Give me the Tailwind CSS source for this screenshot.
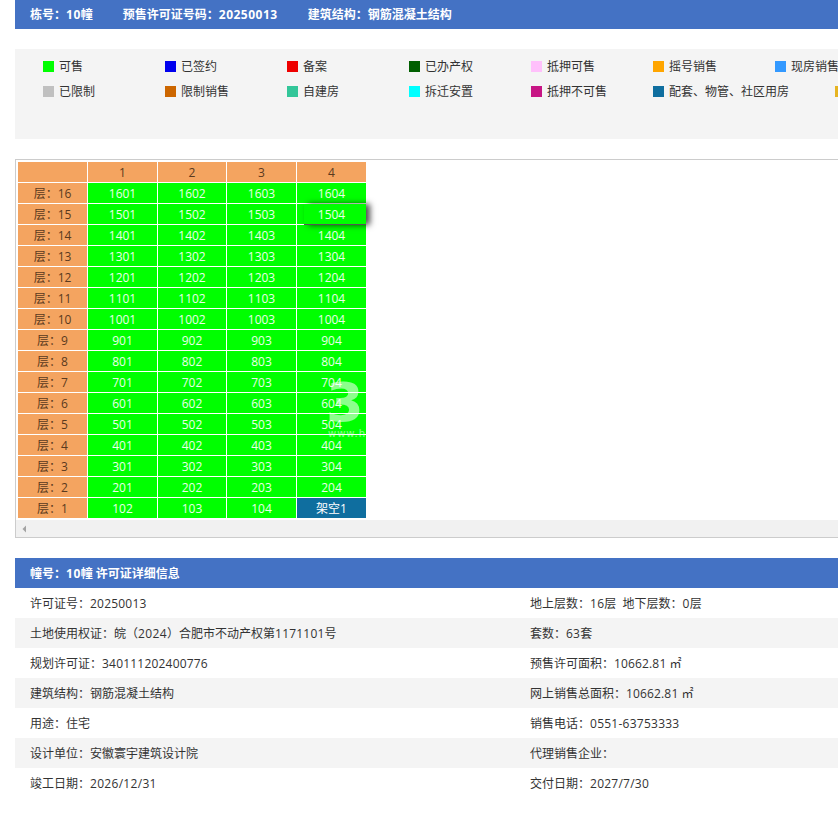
<!DOCTYPE html>
<html lang="zh">
<head>
  <meta charset="UTF-8">
  <title>10幢 许可证详细信息</title>
  <script src="https://cdn.jsdelivr.net/npm/@tailwindcss/browser@4"></script>
</head>
<body class="bg-white overflow-hidden h-[818px] text-[12px] text-[#333] font-['Open_Sans','Noto_Sans_CJK_SC',sans-serif]">
  <div class="w-[1000px] ml-[15px]">

    <div class="h-[29px] bg-[#4472c4] text-white font-bold pl-[15px] flex items-center gap-[30px]">
      <span>栋号：<span class="tracking-[0.5px]">10</span>幢</span>
      <span>预售许可证号码：<span class="tracking-[0.5px]">20250013</span></span>
      <span>建筑结构：钢筋混凝土结构</span>
    </div>

    <div class="mt-[20px] h-[90px] bg-[#f4f4f4] pl-[28px] pt-[5px]">
      <div class="flex h-[25px] items-center">
        <div class="flex items-center w-[122px]"><i class="w-[11px] h-[11px] mr-[5px] bg-[#00ff00]"></i>可售</div>
        <div class="flex items-center w-[122px]"><i class="w-[11px] h-[11px] mr-[5px] bg-[#0000ee]"></i>已签约</div>
        <div class="flex items-center w-[122px]"><i class="w-[11px] h-[11px] mr-[5px] bg-[#ee0000]"></i>备案</div>
        <div class="flex items-center w-[122px]"><i class="w-[11px] h-[11px] mr-[5px] bg-[#005f00]"></i>已办产权</div>
        <div class="flex items-center w-[122px]"><i class="w-[11px] h-[11px] mr-[5px] bg-[#ffc0fb]"></i>抵押可售</div>
        <div class="flex items-center w-[122px]"><i class="w-[11px] h-[11px] mr-[5px] bg-[#ffa500]"></i>摇号销售</div>
        <div class="flex items-center w-[122px]"><i class="w-[11px] h-[11px] mr-[5px] bg-[#3399ff]"></i>现房销售</div>
      </div>
      <div class="flex h-[25px] items-center">
        <div class="flex items-center w-[122px]"><i class="w-[11px] h-[11px] mr-[5px] bg-[#c0c0c0]"></i>已限制</div>
        <div class="flex items-center w-[122px]"><i class="w-[11px] h-[11px] mr-[5px] bg-[#cc6600]"></i>限制销售</div>
        <div class="flex items-center w-[122px]"><i class="w-[11px] h-[11px] mr-[5px] bg-[#33c699]"></i>自建房</div>
        <div class="flex items-center w-[122px]"><i class="w-[11px] h-[11px] mr-[5px] bg-[#00ffff]"></i>拆迁安置</div>
        <div class="flex items-center w-[122px]"><i class="w-[11px] h-[11px] mr-[5px] bg-[#c71585]"></i>抵押不可售</div>
        <div class="flex items-center w-[182px]"><i class="w-[11px] h-[11px] mr-[5px] bg-[#0f6e9f]"></i>配套、物管、社区用房</div>
        <div class="flex items-center w-[122px]"><i class="w-[11px] h-[11px] mr-[5px] bg-[#e6b422]"></i>其他</div>
      </div>
    </div>

    <div class="relative mt-[20px] h-[379px] border border-[#ccc] overflow-hidden">
      <div id="floors" class="absolute left-[2px] top-[2px] grid grid-cols-[69px_69px_68px_69px_69px] auto-rows-[20px] gap-px text-center leading-[22px]"></div>
      <!-- 1504 hover -->
      <div class="absolute left-[288px] top-[44px] w-[62px] h-[21px] shadow-[4px_0_6px_rgba(0,0,0,0.7)] border-b border-[#555]"></div>
      <div class="absolute left-[310px] top-[217px] w-[40px] h-[70px] overflow-hidden whitespace-nowrap text-white/55 text-[54px] leading-[52px] font-['DejaVu_Sans'] font-bold">36<div class="text-[10px] leading-[10px] font-normal tracking-[1px] pl-[2px]">www.h</div></div>
      <div class="absolute left-0 right-0 bottom-0 h-[17px] bg-[#f1f1f1] flex items-center">
        <svg class="ml-[6px]" width="5" height="8" viewBox="0 0 5 8"><path d="M4 0.5V7.5L0.5 4Z" fill="#a3a3a3"/></svg>
      </div>
    </div>

    <div class="mt-[20px] h-[30px] bg-[#4472c4] text-white font-bold pl-[15px] leading-[32px]">幢号：<span class="tracking-[0.5px]">10</span>幢 许可证详细信息</div>

    <div class="grid grid-cols-2 auto-rows-[30px] leading-[32px]">
      <div class="pl-[15px]">许可证号：<span class="tracking-[0.2px]">20250013</span></div><div class="pl-[15px]">地上层数：<span class="tracking-[0.3px]">16</span>层&nbsp;&nbsp;地下层数：<span class="tracking-[0.3px]">0</span>层</div>
      <div class="pl-[15px] bg-[#f4f4f4]">土地使用权证：皖（<span class="tracking-[0.4px]">2024</span>）合肥市不动产权第<span class="tracking-[0.2px]">1171101</span>号</div><div class="pl-[15px] bg-[#f4f4f4]">套数：<span class="tracking-[0.2px]">63</span>套</div>
      <div class="pl-[15px]">规划许可证：<span class="tracking-[0.2px]">340111202400776</span></div><div class="pl-[15px]">预售许可面积：<span class="tracking-[0.15px]">10662.81</span> ㎡</div>
      <div class="pl-[15px] bg-[#f4f4f4]">建筑结构：钢筋混凝土结构</div><div class="pl-[15px] bg-[#f4f4f4]">网上销售总面积：<span class="tracking-[0.15px]">10662.81</span> ㎡</div>
      <div class="pl-[15px]">用途：住宅</div><div class="pl-[15px]">销售电话：<span class="tracking-[0.25px]">0551-63753333</span></div>
      <div class="pl-[15px] bg-[#f4f4f4]">设计单位：安徽寰宇建筑设计院</div><div class="pl-[15px] bg-[#f4f4f4]">代理销售企业：</div>
      <div class="pl-[15px]">竣工日期：<span class="tracking-[0.3px]">2026/12/31</span></div><div class="pl-[15px]">交付日期：<span class="tracking-[0.25px]">2027/7/30</span></div>
    </div>
  </div>

  <script>
    const head = 'bg-[#f4a460] text-[#5a3a1e]';
    const sold = 'bg-[#00ff00] text-[#eaffea]';
    const blue = 'bg-[#0f6e9f] text-white';
    const floors = document.getElementById('floors');
    let html = '';
    ['', '1', '2', '3', '4'].forEach(t => html += `<div class="${head}">${t}</div>`);
    for (let f = 16; f >= 1; f--) {
      html += `<div class="${head}">层：${f}</div>`;
      let rooms = [1, 2, 3, 4].map(n => f * 100 + n);
      if (f === 1) rooms = [102, 103, 104, '架空1'];
      rooms.forEach(r => html += `<div class="${r === '架空1' ? blue : sold}">${r}</div>`);
    }
    floors.innerHTML = html;
  </script>
</body>
</html>
